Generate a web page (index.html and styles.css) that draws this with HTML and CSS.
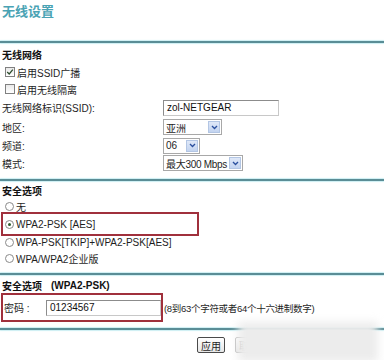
FILE: index.html
```html
<!DOCTYPE html>
<html lang="zh-CN">
<head>
<meta charset="utf-8">
<title>无线设置</title>
<link rel="stylesheet" href="styles.css">
</head>
<body>
<div class="page">
  <h1 class="title">无线设置</h1>
  <div class="rule r1"></div>

  <div class="row head head1">无线网络</div>
  <div class="row cb1"><span class="check on"><svg viewBox="0 0 10 10" width="8" height="8"><path d="M1.5 5 L4 7.5 L8.5 2" fill="none" stroke="#2a4a2a" stroke-width="1.5"/></svg></span><span>启用SSID广播</span></div>
  <div class="row cb2"><span class="check"></span><span>启用无线隔离</span></div>

  <div class="row field ssid"><span class="label">无线网络标识(SSID):</span><span class="input w-ssid">zol-NETGEAR</span></div>
  <div class="row field region"><span class="label">地区:</span><span class="select w-region"><span class="sel-text">亚洲</span><span class="arrow"><svg viewBox="0 0 8 6" width="7" height="5"><path d="M1 1.2 L4 4.2 L7 1.2" fill="none" stroke="#2a4f9e" stroke-width="1.6"/></svg></span></span></div>
  <div class="row field channel"><span class="label">频道:</span><span class="select w-channel"><span class="sel-text">06</span><span class="arrow"><svg viewBox="0 0 8 6" width="7" height="5"><path d="M1 1.2 L4 4.2 L7 1.2" fill="none" stroke="#2a4f9e" stroke-width="1.6"/></svg></span></span></div>
  <div class="row field mode"><span class="label">模式:</span><span class="select w-mode"><span class="sel-text">最大300 Mbps</span><span class="arrow"><svg viewBox="0 0 8 6" width="7" height="5"><path d="M1 1.2 L4 4.2 L7 1.2" fill="none" stroke="#2a4f9e" stroke-width="1.6"/></svg></span></span></div>

  <div class="rule r2"></div>

  <div class="row head head2">安全选项</div>
  <div class="row opt none"><span class="radio"></span><span>无</span></div>
  <div class="redbox rb1"><span class="radio on"></span><span>WPA2-PSK [AES]</span></div>
  <div class="row opt mixed"><span class="radio"></span><span>WPA-PSK[TKIP]+WPA2-PSK[AES]</span></div>
  <div class="row opt ent"><span class="radio"></span><span>WPA/WPA2企业版</span></div>

  <div class="rule r3"></div>

  <div class="row head head3">安全选项<span class="paren">(WPA2-PSK)</span></div>
  <div class="pwrow">
    <div class="redbox rb2"><span class="pwlabel">密码&nbsp;:</span><span class="input w-pw">01234567</span></div>
    <span class="help">(8到63个字符或者64个十六进制数字)</span>
  </div>

  <div class="rule r4"></div>

  <div class="buttons">
    <span class="btn">应用</span>
    <span class="btn btn2">取消</span>
  </div>
</div>
<div class="watermark"></div>
</body>
</html>
```
FILE: styles.css
```css
html, body {
  margin: 0;
  padding: 0;
  background: #ffffff;
}
body {
  width: 384px;
  height: 360px;
  overflow: hidden;
  position: relative;
  color: #1e1e1e;
  font-family: "Liberation Sans", "Noto Sans CJK SC", sans-serif;
  font-size: 10px;
}
.page {
  padding-left: 2px;
}
.title {
  margin: 0 0 19px 0;
  height: 22px;
  line-height: 22px;
  font-family: "Noto Sans CJK SC", sans-serif;
  font-size: 13px;
  font-weight: 700;
  color: #4aa3b4;
}
.rule {
  height: 2px;
  margin-left: -2px;
  background: #5a8d96;
  box-shadow: 0 -1px 1px #cdeff3, 0 1px 1px #cdeff3;
}
.r2 { margin-top: 7px; }
.r3 { margin-top: 4px; }
.r4 { margin-top: 6px; }

.row {
  display: flex;
  align-items: center;
  white-space: nowrap;
}
.head {
  font-family: "Noto Sans CJK SC", sans-serif;
  font-weight: 700;
  color: #111;
}
.paren {
  margin-left: 9px;
  font-family: "Liberation Sans", sans-serif;
  font-weight: 700;
}
.head1 { margin-top: 1px; height: 20px; }
.cb1 { height: 16px; }
.cb2 { height: 18px; }
.ssid { height: 19px; }
.region { height: 20px; }
.channel { height: 17px; }
.mode { height: 18px; }
.head2 { height: 19px; }
.none { height: 12px; }
.mixed { height: 12px; }
.ent { height: 21px; }
.head3 { margin-top: 2px; height: 16px; }

.check {
  box-sizing: border-box;
  width: 10px;
  height: 10px;
  margin: 0 2px 0 3px;
  border: 1px solid #808080;
  background: linear-gradient(#e9e9e9, #ffffff);
  display: flex;
  align-items: center;
  justify-content: center;
}
.radio {
  box-sizing: border-box;
  width: 9px;
  height: 9px;
  margin: 0 2px 0 3px;
  border: 1px solid #8a8a8a;
  border-radius: 50%;
  background: #fff;
  display: flex;
  align-items: center;
  justify-content: center;
}
.radio.on::after {
  content: "";
  width: 3px;
  height: 3px;
  border-radius: 50%;
  background: #2d5a2d;
}

.label {
  width: 161px;
  flex: none;
}
.input {
  box-sizing: border-box;
  height: 16px;
  border: 1px solid #8c8c8c;
  border-right-color: #c8c8c8;
  border-bottom-color: #c8c8c8;
  background: #fff;
  padding-left: 3px;
  display: flex;
  align-items: center;
  color: #111;
}
.w-ssid { width: 116px; }
.w-pw { width: 115px; margin-left: auto; }

.select {
  box-sizing: border-box;
  height: 16px;
  border: 1px solid #a8a8a8;
  background: #fff;
  display: flex;
  align-items: center;
  padding: 0 1px 0 2px;
}
.sel-text { flex: 1; }
.w-region { width: 59px; }
.w-channel { width: 37px; }
.w-mode { width: 80px; }
.w-mode .sel-text { letter-spacing: -0.3px; }
.arrow {
  box-sizing: border-box;
  width: 12px;
  height: 12px;
  flex: none;
  border: 1px solid #b3c6e4;
  background: linear-gradient(#dfe8f8, #c3d4f0);
  display: flex;
  align-items: center;
  justify-content: center;
}

.redbox {
  box-sizing: border-box;
  border: 2px solid #a0303c;
  display: flex;
  align-items: center;
  margin-left: -1px;
  white-space: nowrap;
}
.rb1 {
  width: 198px;
  height: 24px;
}
.rb1 .radio { margin-left: 2px; }
.pwrow {
  display: flex;
  align-items: center;
  white-space: nowrap;
}
.rb2 {
  width: 162px;
  height: 29px;
}
.pwlabel {
  padding-left: 1px;
}
.help {
  margin-left: 1px;
  font-size: 9.5px;
  letter-spacing: -0.3px;
}

.buttons {
  margin-top: 7px;
  height: 16px;
  display: flex;
  padding-left: 195px;
  gap: 10px;
}
.btn {
  box-sizing: border-box;
  height: 16px;
  width: 28px;
  border: 1px solid #4a4a4a;
  border-radius: 2px;
  background: linear-gradient(#ffffff, #e6e6e6);
  display: flex;
  align-items: center;
  justify-content: center;
  font-family: "Noto Sans CJK SC", sans-serif;
}
.btn2 { color: #aaa; border-color: #bbb; }

.watermark {
  position: absolute;
  left: 238px;
  top: 322px;
  width: 140px;
  height: 40px;
  background: #ececec;
  filter: blur(4px);
}
```
